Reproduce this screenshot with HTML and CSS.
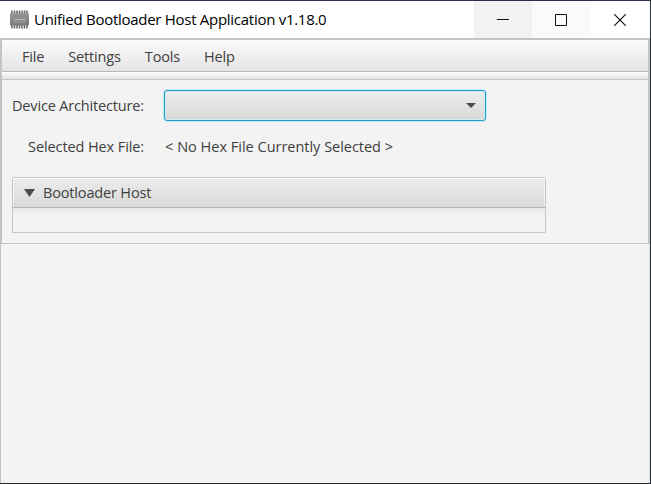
FILE: index.html
```
<!DOCTYPE html>
<html lang="en">
<head>
<meta charset="utf-8">
<title>Unified Bootloader Host Application v1.18.0</title>
<link rel="stylesheet" href="styles.css">
</head>
<body>
<div class="window">
  <header class="titlebar">
    <svg class="app-icon" width="19" height="19" viewBox="0 0 19 19" aria-hidden="true">
      <defs><linearGradient id="chip" x1="0" y1="0" x2="0" y2="1"><stop offset="0" stop-color="#999"/><stop offset="1" stop-color="#777"/></linearGradient></defs>
      <path d="M2 .500v4M4.500.500v4M7 .500v4M9.500.500v4M12 .500v4M14.500.500v4M17 .500v4M2 14v4.500M4.500 14v4.500M7 14v4.500M9.500 14v4.500M12 14v4.500M14.500 14v4.500M17 14v4.500" stroke="#606060" stroke-width="1.500"/>
      <rect x="0" y="3" width="19" height="12.500" rx="1" fill="url(#chip)"/>
      <rect x="3" y="5" width="13" height="8" fill="#8e8e8e"/>
      <path d="M5 9.500h10" stroke="#b8b8b8"/>
    </svg>
    <h1 class="title">Unified Bootloader Host Application v1.18.0</h1>
    <div class="controls">
      <div class="control minimize"><svg width="12" height="12"><path d="M0 5.500h12" stroke="#111"/></svg></div>
      <div class="control maximize"><svg width="12" height="12"><path d="M.5.500h11v11H.5z" fill="none" stroke="#111"/></svg></div>
      <div class="control"><svg width="12" height="12"><path d="M.3.300l11.400 11.400M11.700.300L.3 11.700" stroke="#111" stroke-width="1.150"/></svg></div>
    </div>
  </header>
  <main class="panel">
    <nav class="menubar"><span class="file">File</span><span class="settings">Settings</span><span class="tools">Tools</span><span class="help">Help</span></nav>
    <div class="toolbar"></div>
    <div class="content">
      <div class="form">
        <span class="label device">Device Architecture:</span>
        <div class="combo"><svg width="10" height="5"><path d="M0 0h10L5 5z" fill="#4c4c4c"/></svg></div>
        <span class="label hex">Selected Hex File:</span>
        <span class="value">&lt; No Hex File Currently Selected &gt;</span>
      </div>
      <section class="pane">
        <div class="pane-head"><svg width="11" height="8"><path d="M0 0h11L5.500 8z" fill="#4c4c4c"/></svg><span>Bootloader Host</span></div>
        <div class="pane-body"></div>
      </section>
    </div>
  </main>
</div>
</body>
</html>
```
FILE: styles.css
```
* { box-sizing: border-box; }
html, body { margin: 0; width: 651px; height: 484px; overflow: hidden; }
body { font: 14.5px/20px "Open Sans", "Noto Sans", sans-serif; letter-spacing: -.16px; color: #404040; }
svg { display: block; flex: none; }
span { white-space: nowrap; }
.window {
  width: 651px; height: 484px; background: #f3f3f3;
  border-top: 1px solid #26324a; border-right: 1px solid #2b303c; border-bottom: 1px solid #29262b;
  box-shadow: inset 1px 0 #c5c5c5, inset -1px 0 #d9dde0;
}
.titlebar { display: flex; align-items: center; height: 37px; padding-left: 10px; background: #fff; }
.title { margin: 0 0 1px 5px; font-size: 15px; font-weight: 400; line-height: 20px; color: #000; white-space: nowrap; letter-spacing: -.28px; }
.controls { display: flex; margin-left: auto; height: 37px; }
.control { display: grid; place-items: center; width: 59px; padding-right: 1px; }
.minimize { width: 58px; background: #f2f2f2; padding-right: 0; }
.maximize { background: #fafafa; }
.panel { height: 206px; border: solid #c4c4c4; border-width: 2px 2px 1px; }
.menubar { display: flex; align-items: center; height: 32px; padding: 3px 0 0 20px; background: linear-gradient(#fbfbfb, #e4e4e4); border-bottom: 1px solid #b8b8b8; }
.settings, .tools, .help { margin-left: 24px; }
.toolbar { height: 8px; border-top: 1px solid #fff; border-bottom: 1px solid #c8c4c8; background: linear-gradient(#fafafa, #e4e4e4); }
.content { padding: 10px 0 0 10px; }
.form { display: grid; grid-template-columns: 132px 322px; grid-template-rows: 31px 20px; column-gap: 20px; row-gap: 16px; align-items: center; }
.label { justify-self: end; }
.hex { letter-spacing: -.1px; }
.combo {
  display: flex; align-items: center; justify-content: flex-end; height: 31px; padding-right: 9px;
  border: 1px solid #209bc5; border-radius: 3px; background: linear-gradient(#ededed, #d8d8d8);
  box-shadow: 0 0 0 1px #c8e9f4, inset 0 0 0 1px #d2edf6;
}
.value { padding-left: 1px; letter-spacing: -.03px; word-spacing: .15px; }
.pane { width: 534px; height: 56px; margin-top: 20px; border: 1px solid #c3c3c3; border-radius: 2px 2px 0 0; }
.pane-head { display: flex; align-items: center; height: 30px; padding-left: 11px; gap: 8px; border-bottom: 1px solid #b5b5b5; background: linear-gradient(#ececec, #d9d9d9); box-shadow: inset 0 1px #fff, inset 1px 0 #f4f4f4, inset -1px 0 #f4f4f4; }
.pane-body { height: 24px; background: linear-gradient(#e7e7e7, #f3f3f3 6px); }
```
